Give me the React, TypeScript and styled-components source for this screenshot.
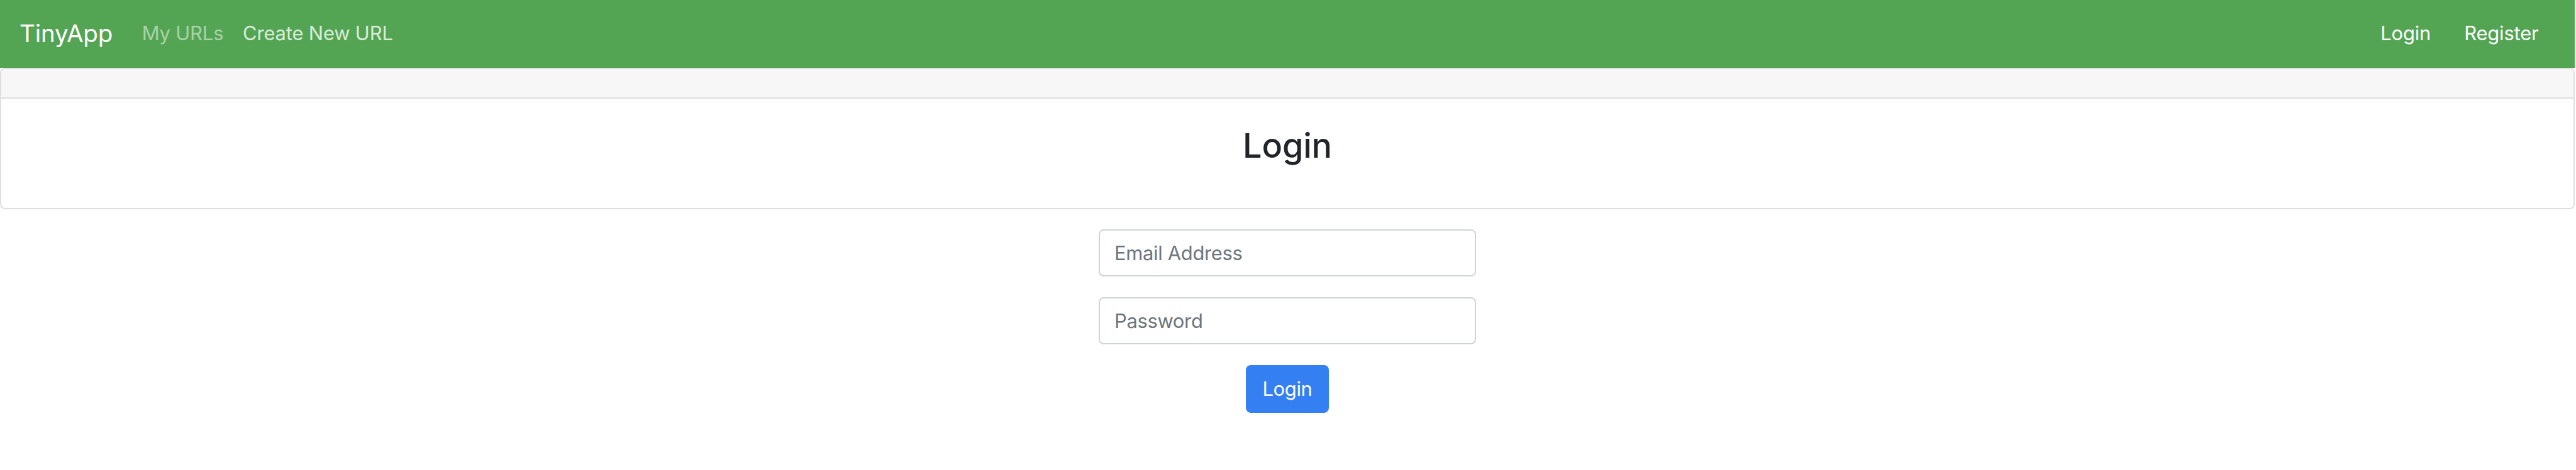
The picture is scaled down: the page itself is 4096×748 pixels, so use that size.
import React from "react";
import styled, { createGlobalStyle } from "styled-components";

const Global = createGlobalStyle`
  html, body { margin: 0; padding: 0; background: #fff; }
  body {
    font-family: Inter, "Noto Sans", "Liberation Sans", sans-serif;
    color: #212529;
    letter-spacing: -0.01em;
  }
  * { box-sizing: border-box; }
`;

const Page = styled.div`
  width: 4094px;
`;

const Navbar = styled.nav`
  height: 108px;
  background: #53a553;
  display: flex;
  align-items: center;
  padding: 0 31px 3px 31px;
`;

const Brand = styled.a`
  font-size: 38.6px;
  color: #fff;
  margin-right: 31px;
  text-decoration: none;
`;

const NavGroup = styled.div<{ $right?: boolean }>`
  display: flex;
  align-items: center;
  margin-left: ${(p) => (p.$right ? "auto" : "0")};
`;

const NavLink = styled.a<{ $tone: number; $pad?: number }>`
  font-size: 30.9px;
  color: rgba(255, 255, 255, ${(p) => p.$tone});
  padding: 0 ${(p) => p.$pad ?? 15.4}px;
  text-decoration: none;
`;

const Card = styled.section`
  border: 2px solid #dfdfdf;
  border-radius: 8px;
  overflow: hidden;
`;

const CardHeader = styled.div`
  height: 47px;
  background: #f7f7f7;
  border-bottom: 2px solid #dfdfdf;
`;

const CardBody = styled.div`
  padding: 43px 38px 51px;
  text-align: center;
`;

const Title = styled.h3`
  margin: 0 0 15px;
  font-size: 54px;
  font-weight: 500;
  line-height: 1.2;
  color: #212529;
`;

const Form = styled.form`
  width: 600px;
  margin: 32px auto 0;
  display: flex;
  flex-direction: column;
  align-items: center;
  gap: 33px;
`;

const Input = styled.input`
  width: 100%;
  height: 75px;
  border: 2px solid #ced4da;
  border-radius: 8px;
  padding: 0 23px;
  font-family: inherit;
  font-size: 30.9px;
  letter-spacing: -0.01em;
  color: #495057;
  outline: none;
  &::placeholder { color: #6c757d; }
`;

const Button = styled.button`
  width: 132px;
  height: 76px;
  border: none;
  border-radius: 8px;
  background: #3480f3;
  color: #fff;
  font-family: inherit;
  font-size: 30.9px;
  letter-spacing: -0.01em;
  cursor: pointer;
`;

export default function App() {
  return (
    <Page>
      <Global />
      <Navbar>
        <Brand href="#">TinyApp</Brand>
        <NavGroup>
          <NavLink href="#" $tone={0.5}>My URLs</NavLink>
          <NavLink href="#" $tone={0.8}>Create New URL</NavLink>
        </NavGroup>
        <NavGroup $right>
          <NavLink href="#" $tone={1} $pad={26.5}>Login</NavLink>
          <NavLink href="#" $tone={1} $pad={26.5}>Register</NavLink>
        </NavGroup>
      </Navbar>
      <Card>
        <CardHeader />
        <CardBody>
          <Title>Login</Title>
        </CardBody>
      </Card>
      <Form onSubmit={(e) => e.preventDefault()}>
        <Input type="email" placeholder="Email Address" />
        <Input type="password" placeholder="Password" />
        <Button type="submit">Login</Button>
      </Form>
    </Page>
  );
}
